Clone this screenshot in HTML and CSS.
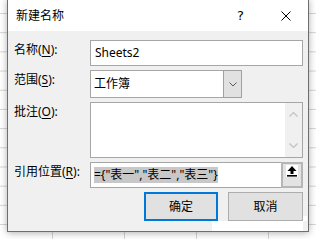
FILE: index.html
```html
<!DOCTYPE html>
<html lang="zh-CN">
<head>
<meta charset="utf-8">
<title>新建名称</title>
<link rel="stylesheet" href="styles.css">
</head>
<body>
<div class="sheet">
  <div class="dialog">
    <div class="titlebar">
      <span class="title">新建名称</span>
      <span class="help">?</span>
      <svg class="close" width="10" height="10" viewBox="0 0 10 10"><path d="M0.5 0.5L9.5 9.5M9.5 0.5L0.5 9.5" stroke="#000" stroke-width="1" fill="none"/></svg>
    </div>
    <div class="content">
      <div class="form">
        <label class="lbl">名称(<u>N</u>):</label>
        <div class="field name">Sheets2</div>
        <label class="lbl">范围(<u>S</u>):</label>
        <div class="field select">
          <span class="sel-text">工作簿</span>
          <span class="arrow"><svg width="8" height="5" viewBox="0 0 8 5"><path d="M0.5 0.5L4 4L7.5 0.5" stroke="#5a5a5a" stroke-width="1" fill="none"/></svg></span>
        </div>
        <label class="lbl">批注(<u>O</u>):</label>
        <div class="field comment">
          <div class="scrollbar">
            <svg width="9" height="5" viewBox="0 0 9 5"><path d="M0.5 4.5L4.5 0.5L8.5 4.5" stroke="#c2c2c2" stroke-width="1.2" fill="none"/></svg>
            <svg width="9" height="5" viewBox="0 0 9 5"><path d="M0.5 0.5L4.5 4.5L8.5 0.5" stroke="#c2c2c2" stroke-width="1.2" fill="none"/></svg>
          </div>
        </div>
        <label class="lbl">引用位置(<u>R</u>):</label>
        <div class="field ref">
          <span class="value"><span class="hl">={"表一","表二","表三"}</span></span>
          <span class="refbtn"><span class="refbox"><svg width="12" height="12" viewBox="0 0 12 12"><path d="M6 1L10.5 6H7.5V9H4.5V6H1.5Z" fill="#000"/><rect x="1" y="10" width="10" height="1.6" fill="#000"/></svg></span></span>
        </div>
      </div>
      <div class="buttons">
        <button class="btn ok">确定</button>
        <button class="btn cancel">取消</button>
      </div>
    </div>
    <div class="glitch g1"></div>
    <div class="glitch g2"></div>
  </div>
</div>
</body>
</html>
```

FILE: styles.css
```css
html, body {
  margin: 0;
  padding: 0;
}

body {
  width: 316px;
  height: 239px;
  overflow: hidden;
  font-family: "Noto Sans", "Noto Sans CJK SC", sans-serif;
  font-size: 12px;
  color: #000;
}

.sheet {
  position: relative;
  width: 316px;
  height: 239px;
  background-color: #fff;
  background-image:
    linear-gradient(to right, #d4d4d4 1px, transparent 1px),
    linear-gradient(to bottom, #d4d4d4 1px, transparent 1px);
  background-size: 72px 100%, 100% 19.2px;
  background-position: 52px 0, 0 13px;
}

.dialog {
  position: absolute;
  left: 7px;
  top: -1px;
  width: 302px;
  height: 233px;
  box-sizing: border-box;
  border: 1px solid #6e6e6e;
  background: #f0f0f0;
  box-shadow: 0 1px 7px rgba(0, 0, 0, 0.32);
  display: flex;
  flex-direction: column;
}

.titlebar {
  height: 31px;
  flex: none;
  background: #fff;
  display: flex;
  align-items: center;
  padding-left: 8px;
}

.title {
  flex: 1;
  line-height: 16px;
}

.help {
  font-family: "DejaVu Sans", sans-serif;
  font-size: 13px;
  line-height: 16px;
  margin-right: 37px;
}

.close {
  display: block;
  margin-right: 17px;
}

.content {
  flex: 1;
  display: flex;
  flex-direction: column;
  gap: 4px;
  padding: 9px 5px 0 6px;
}

.form {
  display: grid;
  grid-template-columns: 76px 1fr;
  grid-template-rows: 26px 28px 56px 26px;
  row-gap: 4px;
}

.lbl {
  padding-top: 2px;
  line-height: 16px;
  white-space: nowrap;
}

.lbl u {
  text-decoration-thickness: 1px;
  text-underline-offset: 2px;
}

.field {
  box-sizing: border-box;
  border: 1px solid #a6a6a6;
  background: #fff;
  display: flex;
  align-items: center;
  line-height: 16px;
}

.name {
  padding-left: 4px;
}

.select {
  width: 152px;
  padding-left: 3px;
}

.sel-text {
  flex: 1;
}

.arrow {
  align-self: stretch;
  width: 17px;
  margin: -1px -1px -1px 0;
  border: 1px solid #a0a0a0;
  background: #e1e1e1;
  display: flex;
  align-items: center;
  justify-content: center;
}

.arrow svg {
  display: block;
}

.comment {
  justify-content: flex-end;
  align-items: stretch;
}

.scrollbar {
  width: 17px;
  background: #f0f0f0;
  display: flex;
  flex-direction: column;
  justify-content: space-between;
  align-items: center;
  padding: 9px 0 9px;
}

.scrollbar svg {
  display: block;
}

.ref {
  align-items: stretch;
}

.value {
  flex: 1;
  display: flex;
  align-items: center;
  padding-left: 3px;
}

.hl {
  background: #c8c8c8;
  line-height: 16px;
}

.refbtn {
  width: 22px;
  box-sizing: border-box;
  margin: -1px -1px -1px 0;
  border: 2px solid #b6b6b6;
  background: #e3e3e3;
  display: flex;
  justify-content: center;
  align-items: flex-start;
  padding-top: 1px;
}

.refbox {
  width: 12px;
  height: 12px;
  background: #fff;
  display: block;
}

.refbox svg {
  display: block;
}

.buttons {
  display: flex;
  justify-content: flex-end;
  gap: 10px;
}

.btn {
  height: 29px;
  box-sizing: border-box;
  font-family: "Noto Sans", "Noto Sans CJK SC", sans-serif;
  font-size: 12px;
  line-height: 16px;
  color: #000;
  background: #e1e1e1;
  border: 1px solid #adadad;
  padding: 0;
  margin: 0;
}

.ok {
  width: 74px;
  border: 2px solid #0078d7;
}

.cancel {
  width: 75px;
}

.glitch {
  position: absolute;
  background: #fff;
}

.g1 {
  left: 204px;
  top: 221px;
  width: 91px;
  height: 10px;
}

.g2 {
  left: 295px;
  top: 216px;
  width: 4px;
  height: 5px;
}
```
